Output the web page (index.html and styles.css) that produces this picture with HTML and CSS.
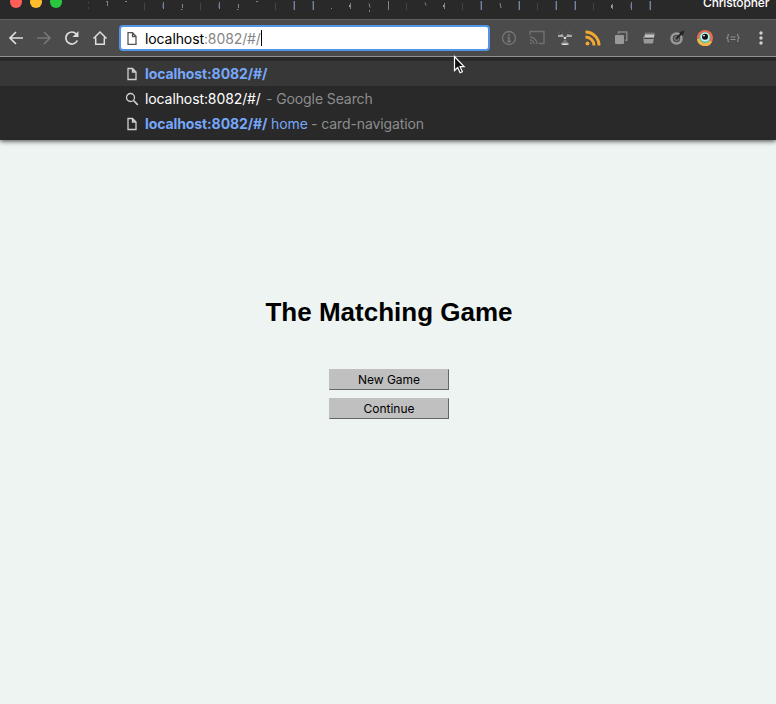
FILE: index.html
```html
<!DOCTYPE html>
<html lang="en">
<head>
<meta charset="utf-8">
<title>card-navigation</title>
<link rel="stylesheet" href="styles.css">
</head>
<body>
<header class="chrome">
  <div class="titlebar">
    <div class="lights"><i class="red"></i><i class="yellow"></i><i class="green"></i></div>
    <svg class="tabs" width="580" height="20" viewBox="80 0 580 20" fill="none">
      <path stroke="#454545" d="M88.5 2v2M88.5 7v2M144.500 3v7M200.500 3v7M275.500 3v7M406.500 3v7M462.500 3v7M537.500 3v7M593.500 3v7"/>
      <path stroke="#7d8390" d="M106 1.500h2M107.500 1v5M125 1.500h2M163.500 2v7M182.500 4v4M181 9.500h1.500M219.500 2v7M238.500 4v4M237 9.500h1.500M256 1.500h2M294.500 1v9M313.500 1v9M331 8.500h1M350.500 3v6M369 3.500l1 4M369.500 10v2M388.500 1v9M425 2.500l1 3M444.500 3v6M481.500 1v9M500 3l1 5M519.500 1v9M556.500 1v9M575.500 1v9M612.500 4v5M631.500 2v8M650.500 1v9"/>
      <path stroke="#3d4b70" d="M162.500 4v4M218.500 4v4M293.500 1v9M312.500 1v9M480.500 1v9M518.500 1v9M555.500 1v9M574.500 1v9M630.500 4v4M649.500 1v9"/>
      <path stroke="#a1a1a1" d="M349.500 5v2M443.500 5v2M611.500 5v3"/>
    </svg>
    <span class="profile">Christopher</span>
  </div>
  <div class="toolbar">
    <nav class="navs">
      <svg width="16" height="16" viewBox="0 0 16 16"><path d="M15 8H2M8 2L2 8l6 6"/></svg>
      <svg class="off" width="16" height="16" viewBox="0 0 16 16"><path d="M1 8h13M8 2l6 6-6 6"/></svg>
      <svg width="16" height="16" viewBox="0 0 16 16"><path d="M13.300 10.500A6 6 0 1 1 12.300 4"/><path class="solid" d="M14.500 1v6h-6z"/></svg>
      <svg width="16" height="16" viewBox="0 0 16 16"><path d="M1.500 8.500L8 2l6.500 6.500M3.700 7.500v6.700h8.600V7.500" stroke-width="1.500"/></svg>
    </nav>
    <div class="omnibox">
      <svg width="10" height="13" viewBox="0 0 10 13"><path d="M1 .7h4.500L9 4.200v8.100H1zM5.500.7v3.800H9"/></svg>
      <span class="url">localhost<em>:8082/#/</em></span><i class="caret"></i>
    </div>
    <div class="extensions">
      <svg width="16" height="16" viewBox="0 0 16 16" fill="none" stroke="#777"><circle cx="8" cy="8" r="6.500" stroke-width="1.300"/><path d="M8 4v2M6.500 7.500H8V11M6 11.500h4" stroke-width="1.500"/></svg>
      <svg width="18" height="16" viewBox="0 0 18 16" fill="none" stroke="#707070" stroke-width="1.400"><path d="M2 5V1.500h14v12h-5M2 7a7 7 0 0 1 7 7M2 10a4 4 0 0 1 4 4M2 13h1v1"/></svg>
      <svg width="16" height="16" viewBox="0 0 16 16"><path fill="#aaa" d="M1 7Q1 3.500 4 1.500L7 7zM15 7q0-3.500-3-5.500L9 7z"/><path fill="#333" d="M1.500 5Q2.300 2.800 4 1.500L5.200 4zM14.500 5Q13.700 2.800 12 1.500L10.800 4z"/><circle cx="8" cy="8" r="1.300" fill="#ddd"/><path fill="#777" d="M7 10h2l3 4q-4 2-8 0z"/><path fill="#eee" d="M5 13.500h6l1 .7q-4 1.600-8 0z"/></svg>
      <svg width="16" height="16" viewBox="0 0 16 16" fill="none" stroke="#f3a831" stroke-width="3"><path d="M.5 2A13.500 13.500 0 0 1 14 15.500M.5 7A8.500 8.500 0 0 1 9 15.500"/><circle cx="2.500" cy="13.500" r="2" fill="#f3a831" stroke="none"/></svg>
      <svg width="16" height="16" viewBox="0 0 16 16"><path d="M5.500 4V2h8.300v8.300H12" fill="none" stroke="#858585" stroke-width="1.500"/><rect x="2" y="5" width="9" height="9" rx="1" fill="#999"/></svg>
      <svg width="16" height="16" viewBox="0 0 16 16"><path fill="#707070" d="M4 2.500h10l-1 5H3z"/><path fill="#c4c4c4" d="M4 4.500h9.500L13 7H3.500z"/><path fill="#999" d="M2 7h11l-1 6.500H3z"/><path fill="#444" d="M2.300 8h10.300v1H2.500z"/></svg>
      <svg width="16" height="16" viewBox="0 0 16 16" fill="none"><circle cx="7.500" cy="8.500" r="5" stroke="#999" stroke-width="2.500"/><circle cx="7.500" cy="8.500" r="2" stroke="#858585"/><path d="M7.500 8.500L14 2M11 3l3-1-1 3" stroke="#252525" stroke-width="2"/></svg>
      <svg width="16" height="16" viewBox="0 0 16 16"><circle cx="8" cy="8" r="8" fill="#ec6a50"/><path fill="#f4b54b" d="M0 9a8 8 0 0 0 15 3L8 8z"/><circle cx="8" cy="7.500" r="5.500" fill="#54c4a0"/><circle cx="8" cy="7" r="4.600" fill="#c9edf2"/><circle cx="8" cy="6.700" r="3" fill="#111"/><circle cx="7" cy="5.600" r=".9" fill="#fff"/></svg>
      <svg width="16" height="16" viewBox="0 0 16 16" fill="none" stroke="#929292"><path d="M4 4.500H3v2.700L1.700 8 3 8.800v2.700h1M12 4.500h1v2.700l1.300.8-1.300.8v2.700h-1M5.500 7h5M5.500 9.500h5"/></svg>
      <svg width="16" height="16" viewBox="0 0 16 16" fill="#d0d0d0"><circle cx="8" cy="3" r="1.700"/><circle cx="8" cy="8" r="1.700"/><circle cx="8" cy="13" r="1.700"/></svg>
    </div>
  </div>
  <ul class="suggestions">
    <li class="active"><svg width="14" height="14" viewBox="0 0 14 14"><path d="M3 1.500h4.500L11 5v7.500H3zM7.500 1.500V5H11"/></svg><b class="w-url">localhost:8082/#/</b></li>
    <li><svg width="14" height="14" viewBox="0 0 14 14"><circle cx="5.500" cy="5.500" r="4"/><path d="M8.500 8.500l4.300 4.300" stroke-width="1.700"/></svg><span class="query">localhost:8082/#/</span><span class="note google">- Google Search</span></li>
    <li><svg width="14" height="14" viewBox="0 0 14 14"><path d="M3 1.500h4.500L11 5v7.500H3zM7.500 1.500V5H11"/></svg><b class="w-url">localhost:8082/#/</b><span class="home">home</span><span class="note card">- card-navigation</span></li>
  </ul>
</header>
<main>
  <h1>The Matching Game</h1>
  <button>New Game</button>
  <button>Continue</button>
</main>
<svg class="pointer" width="14" height="20" viewBox="0 0 14 20"><path d="M1.500 1.500v14l3.200-3 2.400 5.200 2.300-1-2.300-5h4z" fill="#111" stroke="#fff" stroke-width="1.200"/></svg>
</body>
</html>
```
FILE: styles.css
```css
* { box-sizing: border-box; }
body {
  margin: 0;
  height: 704px;
  overflow: hidden;
  background: #edf4f2;
  font-family: Inter, sans-serif;
}
.chrome {
  position: relative;
  height: 140px;
  background: #292929;
  box-shadow: 0 1px 5px rgba(0, 0, 0, .75);
}
.titlebar {
  display: flex;
  height: 20px;
  border-bottom: 1px solid #625f5f;
  overflow: hidden;
}
.lights {
  display: flex;
  gap: 8px;
  width: 80px;
  padding-left: 10px;
}
.lights i {
  width: 12px;
  height: 12px;
  margin-top: -4px;
  border-radius: 50%;
}
.red { background: #ff5f57; }
.yellow { background: #ffbd2e; }
.green { background: #28c940; }
.tabs { flex: none; }
.profile {
  margin: -5px 0 0 43px;
  color: #fff;
  font: 500 12px/16px Inter, sans-serif;
  letter-spacing: -.15px;
}
.toolbar {
  display: flex;
  align-items: center;
  height: 37px;
  background: #4b4b4b;
  border-bottom: 1px solid #929292;
}
.navs {
  display: flex;
  gap: 12px;
  width: 119px;
  padding-left: 8px;
}
.navs svg {
  fill: none;
  stroke: #dedede;
  stroke-width: 1.7;
}
.navs .off { stroke: #777; }
.navs .solid { fill: #dedede; stroke: none; }
.omnibox {
  display: flex;
  align-items: center;
  width: 371px;
  height: 26px;
  padding-left: 6px;
  background: #fff;
  border: 2px solid #5395e6;
  border-radius: 4px;
}
.omnibox svg {
  margin-right: 8px;
  fill: none;
  stroke: #555;
  stroke-width: 1.3;
}
.url {
  width: 116px;
  font-size: 14px;
  letter-spacing: -.1px;
  white-space: nowrap;
}
.url em { color: #858585; font-style: normal; }
.caret { width: 1px; height: 16px; background: #000; }
.extensions {
  display: flex;
  margin-left: 5px;
}
.extensions svg { width: 28px; }
.suggestions {
  margin: 0;
  padding: 4px 0 0;
  list-style: none;
}
.suggestions li {
  display: flex;
  align-items: center;
  height: 25px;
  padding-left: 125px;
  font-size: 14px;
  white-space: nowrap;
}
.suggestions .active { background: #373737; }
.suggestions svg {
  margin-right: 6px;
  fill: none;
  stroke: #d0d0d0;
  stroke-width: 1.3;
}
.w-url {
  width: 126px;
  color: #76a7fa;
  font-weight: 700;
  letter-spacing: -.1px;
}
.query { width: 121px; color: #fff; letter-spacing: -.1px; }
.home { width: 40px; color: #76a7fa; letter-spacing: -.1px; }
.note { color: #8d8d8d; letter-spacing: -.1px; }
main {
  display: flex;
  flex-direction: column;
  align-items: center;
  padding: 157px 0 0 2px;
}
h1 {
  margin: 0 0 42px;
  font: bold 26px/30px "Liberation Sans", sans-serif;
}
button {
  width: 120px;
  height: 21px;
  margin-bottom: 8px;
  padding: 0;
  background: #c0c0c0;
  border: 1px solid;
  border-color: #c0c0c0 #666 #666 #c0c0c0;
  color: #000;
  font: 12px/17px Inter, sans-serif;
}
.pointer {
  position: absolute;
  left: 453px;
  top: 55px;
}
```
